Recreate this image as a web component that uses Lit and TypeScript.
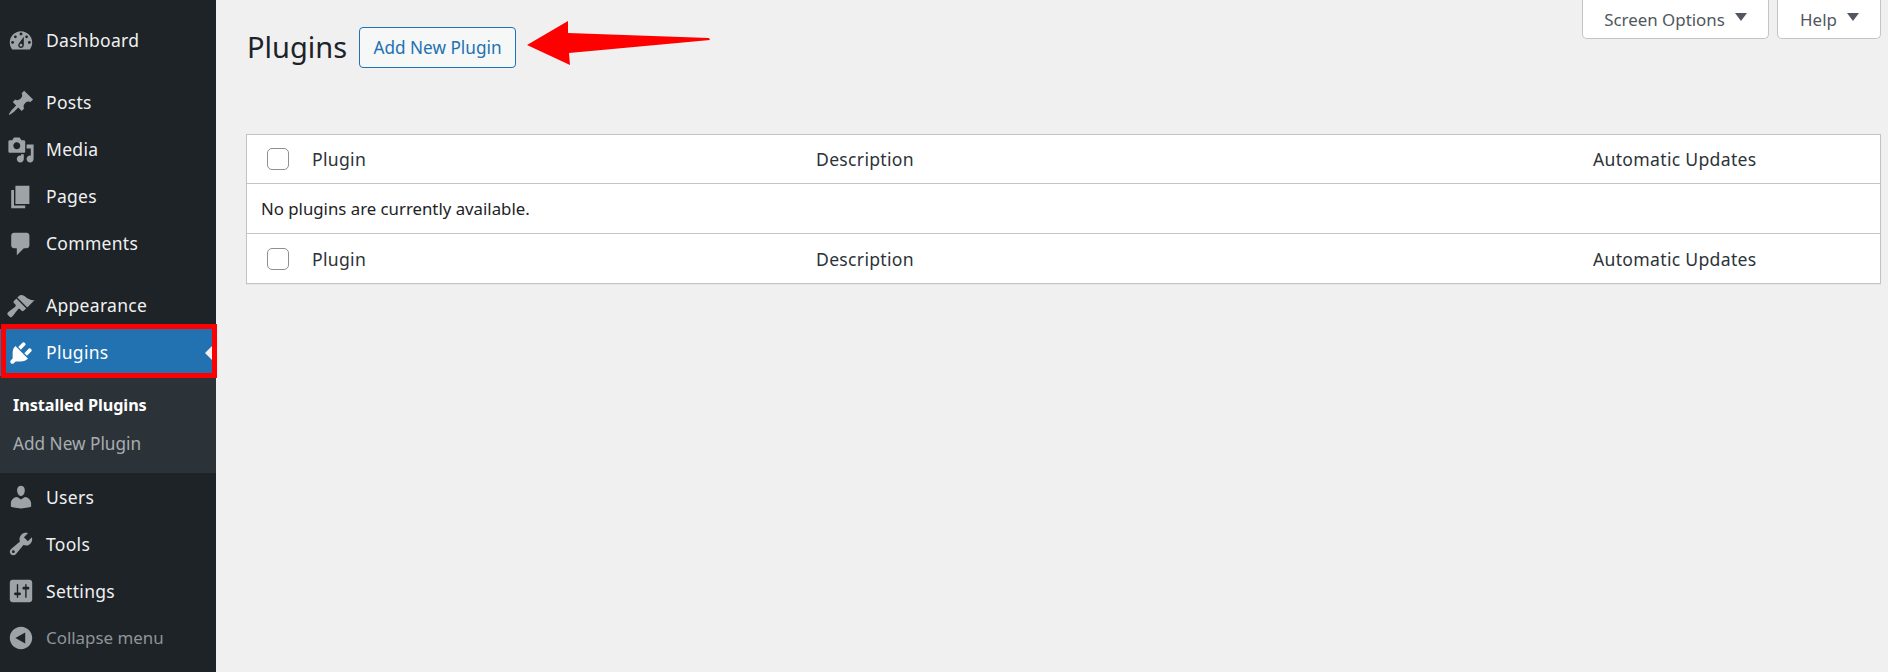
import { LitElement, html, css, svg } from "lit";
import { customElement } from "lit/decorators.js";

const P: Record<string, string> = {
  dashboard: "M3.76 16h12.48c1.1-1.37 1.76-3.11 1.76-5 0-4.42-3.58-8-8-8s-8 3.58-8 8c0 1.89.66 3.63 1.76 5zM10 4c.55 0 1 .45 1 1s-.45 1-1 1-1-.45-1-1 .45-1 1-1zM6 6c.55 0 1 .45 1 1s-.45 1-1 1-1-.45-1-1 .45-1 1-1zm8 0c.55 0 1 .45 1 1s-.45 1-1 1-1-.45-1-1 .45-1 1-1zm-5.37 5.55L12 7v6c0 1.1-.9 2-2 2s-2-.9-2-2c0-.57.24-1.08.63-1.45zM4 10c.55 0 1 .45 1 1s-.45 1-1 1-1-.45-1-1 .45-1 1-1zm12 0c.55 0 1 .45 1 1s-.45 1-1 1-1-.45-1-1 .45-1 1-1zm-5 3c0-.55-.45-1-1-1s-1 .45-1 1 .45 1 1 1 1-.45 1-1z",
  posts: "M10.44 3.02l1.82-1.82 6.36 6.35-1.83 1.82c-1.05-.68-2.48-.57-3.41.36l-.75.75c-.92.93-1.04 2.35-.35 3.41l-1.83 1.82-2.41-2.41-2.8 2.79c-.42.42-3.38 2.71-3.8 2.29s1.86-3.39 2.28-3.81l2.79-2.79L4.1 9.36l1.83-1.82c1.05.69 2.48.57 3.4-.36l.75-.75c.93-.92 1.05-2.35.36-3.41z",
  media: "M13 11V4c0-.55-.45-1-1-1h-1.67L9 1H5L3.67 3H2c-.55 0-1 .45-1 1v7c0 .55.45 1 1 1h10c.55 0 1-.45 1-1zM7 4.5c1.38 0 2.5 1.12 2.5 2.5S8.38 9.5 7 9.5 4.5 8.38 4.5 7 5.62 4.5 7 4.5zM14 6h5v10.5c0 1.38-1.12 2.5-2.5 2.5S14 17.88 14 16.5s1.12-2.5 2.5-2.5c.17 0 .34.02.5.05V9h-3V6zm-4 8.05V13h2v3.5c0 1.38-1.12 2.5-2.5 2.5S7 17.88 7 16.5 8.12 14 9.5 14c.17 0 .34.02.5.05z",
  pages: "M6 15V2h10v13H6zm-1 1h8v2H3V5h2v11z",
  comments: "M5 2h9c1.1 0 2 .9 2 2v7c0 1.1-.9 2-2 2h-2l-5 5v-5H5c-1.1 0-2-.9-2-2V4c0-1.1.9-2 2-2z",
  appearance: "M14.48 11.06L7.41 3.99l1.5-1.5c.5-.56 2.3-.47 3.51.32 1.21.8 1.43 1.28 2.91 2.1 1.18.64 2.45 1.26 4.45.85zm-.71.71L6.7 4.7 4.93 6.47c-.39.39-.39 1.02 0 1.41l1.06 1.06c.39.39.39 1.03 0 1.42-.6.6-1.43 1.15-2.21 1.75-.78.59-1.67 1.18-2.38 1.88-.29.28-.58.57-.87.86-.4.4-.4 1.04 0 1.44l1.48 1.48c.4.4 1.04.4 1.44 0 .29-.29.58-.58.86-.87.7-.71 1.29-1.6 1.88-2.38.6-.78 1.15-1.61 1.75-2.21.39-.39 1.03-.39 1.42 0l1.06 1.06c.39.39 1.02.39 1.41 0z",
  plugins: "M13.11 4.36L9.87 7.6 8 5.73l3.24-3.24c.35-.34 1.05-.2 1.56.32.52.51.66 1.21.31 1.55zm-8 1.77l.91-1.12 9.01 9.01-1.19.84c-.71.71-2.63 1.16-3.82 1.16H6.14L4.9 17.26c-.59.59-1.54.59-2.12 0-.59-.58-.59-1.53 0-2.12l1.24-1.24v-3.88c0-1.13.4-3.19 1.09-3.89zm7.26 3.97l3.24-3.24c.34-.35 1.04-.21 1.55.31.52.51.66 1.21.31 1.55l-3.24 3.25z",
  users: "M10 9.25c-2.27 0-2.73-3.44-2.73-3.44C7 4.02 7.82 2 9.97 2c2.16 0 2.98 2.02 2.71 3.81 0 0-.41 3.44-2.68 3.44zm0 2.57L12.72 10c2.39 0 4.52 2.33 4.52 4.53v2.49s-3.65 1.13-7.24 1.13c-3.65 0-7.24-1.13-7.24-1.13v-2.49c0-2.25 1.94-4.48 4.47-4.48z",
  tools: "M16.68 9.77c-1.34 1.34-3.3 1.67-4.95.99l-5.41 6.52c-.99.99-2.59.99-3.57 0-.99-.98-.99-2.58 0-3.57l6.52-5.42c-.68-1.65-.35-3.61.99-4.95 1.28-1.28 3.12-1.62 4.72-1.06l-2.89 2.89 2.82 2.82 2.86-2.87c.53 1.58.18 3.39-1.09 4.65zM3.81 16.21c.4.39 1.03.39 1.42 0 .4-.4.4-1.03 0-1.43-.39-.39-1.02-.39-1.42 0-.39.4-.39 1.03 0 1.43z",
  settings: "M18 16V4c0-1.1-.9-2-2-2H4c-1.1 0-2 .9-2 2v12c0 1.1.9 2 2 2h12c1.1 0 2-.9 2-2zM8 11h1c.55 0 1 .45 1 1s-.45 1-1 1H8v1.5c0 .28-.22.5-.5.5s-.5-.22-.5-.5V13H6c-.55 0-1-.45-1-1s.45-1 1-1h1V5.5c0-.28.22-.5.5-.5s.5.22.5.5V11zm5-2h-1c-.55 0-1-.45-1-1s.45-1 1-1h1V5.5c0-.28.22-.5.5-.5s.5.22.5.5V7h1c.55 0 1 .45 1 1s-.45 1-1 1h-1v5.5c0 .28-.22.5-.5.5s-.5-.22-.5-.5V9z",
  collapse: "M18 10c0-4.42-3.58-8-8-8s-8 3.58-8 8 3.58 8 8 8 8-3.58 8-8zm-5 4l-7-4 7-4v8z",
};

const icon = (n: string) => html`<svg class="ico" viewBox="0 0 20 20">${svg`<path d=${P[n]}></path>`}</svg>`;

const item = (n: string, label: string, cls = "") =>
  html`<div class="item ${cls}">${icon(n)}<span>${label}</span></div>`;

const row = (cls: string) => html`
  <div class="row ${cls}">
    <span class="check"></span><span>Plugin</span><span>Description</span><span>Automatic Updates</span>
  </div>`;

@customElement("app-root")
export class AppRoot extends LitElement {
  static styles = css`
    :host {
      display: block;
      position: relative;
      width: 1888px;
      height: 672px;
      overflow: hidden;
      background: #f0f0f1;
      font-family: "Noto Sans", "Open Sans", sans-serif;
      font-size: 16.8px;
      color: #1d2327;
    }
    .page { display: flex; height: 672px; }
    aside {
      width: 216px;
      flex: none;
      background: #1d2327;
      padding-top: 17px;
      box-sizing: border-box;
      color: #f0f0f1;
      font-size: 17.5px;
      letter-spacing: 0.3px;
    }
    .item {
      height: 47px;
      display: flex;
      align-items: center;
      padding-left: 7px;
      gap: 11px;
      position: relative;
      box-sizing: border-box;
    }
    .item span { padding-bottom: 1px; }
    .item.low span { padding-bottom: 0; padding-top: 1px; }
    .ico { width: 28px; height: 28px; fill: #9ea3a8; flex: none; }
    .sep { margin-bottom: 15px; }
    .active { background: #2271b1; color: #fff; }
    .active .ico { fill: #fff; }
    .active::before {
      content: "";
      position: absolute;
      right: 3px;
      top: 16px;
      border: 8px solid transparent;
      border-left: 0;
      border-right-color: #f0f0f1;
    }
    .active::after {
      content: "";
      position: absolute;
      left: 1px;
      top: -5px;
      width: 216px;
      height: 54px;
      box-sizing: border-box;
      border: 5px solid #ff0000;
    }
    .sub { background: #2c3338; padding: 9px 0 10px; font-size: 17.2px; letter-spacing: 0; }
    .sub div { height: 39px; line-height: 40px; padding-left: 13px; color: #a9adb1; }
    .sub .cur { color: #fff; font-weight: 700; font-size: 16.2px; letter-spacing: -0.05px; }
    .collapse { color: #90949a; font-size: 16.9px; letter-spacing: 0; }
    main { flex: 1; padding: 0 7px 0 30px; min-width: 0; }
    .top { display: flex; justify-content: space-between; align-items: flex-start; }
    .title { display: flex; align-items: flex-start; padding-top: 27px; }
    h1 {
      margin: 0;
      width: 113px;
      padding-left: 1px;
      box-sizing: border-box;
      font-weight: 400;
      font-size: 29px;
      line-height: 40px;
      color: #1d2327;
    }
    .btn {
      height: 41px;
      width: 157px;
      box-sizing: border-box;
      display: flex;
      align-items: center;
      justify-content: center;
      padding-bottom: 1px;
      border: 1px solid #2271b1;
      border-radius: 4px;
      background: #f6f7f7;
      color: #2271b1;
      font-size: 17.2px;
    }
    .tabs { display: flex; gap: 8px; }
    .tab {
      height: 39px;
      box-sizing: border-box;
      background: #fff;
      border: 1px solid #c3c4c7;
      border-top: 0;
      border-radius: 0 0 5px 5px;
      color: #50575e;
      display: flex;
      align-items: center;
      justify-content: center;
      gap: 10px;
      font-size: 16.9px;
    }
    .tab::after {
      content: "";
      border: 6px solid transparent;
      border-top: 8px solid #50575e;
      border-bottom: 0;
      margin-bottom: 5px;
    }
    .t1 { width: 187px; }
    .t2 { width: 104px; padding-left: 1px; }
    .table {
      margin-top: 66px;
      background: #fff;
      border: 1px solid #c3c4c7;
      box-shadow: 0 1px 1px rgba(0, 0, 0, 0.04);
    }
    .row {
      display: grid;
      grid-template-columns: 65px 504px 777px 1fr;
      align-items: center;
      height: 48px;
      box-sizing: border-box;
      color: #2c3338;
      font-size: 17.6px;
      letter-spacing: 0.3px;
    }
    .row.foot { border-top: 1px solid #c3c4c7; height: 50px; }
    .check {
      width: 22px;
      height: 22px;
      box-sizing: border-box;
      margin-left: 20px;
      border: 1px solid #8c8f94;
      border-radius: 5px;
      background: #fff;
    }
    .empty {
      height: 50px;
      box-sizing: border-box;
      border-top: 1px solid #c3c4c7;
      display: flex;
      align-items: center;
      padding-left: 14px;
      color: #1d2327;
    }
    .arrow { position: absolute; left: 520px; top: 15px; width: 200px; height: 56px; fill: #ff0000; }
  `;

  render() {
    return html`
      <div class="page">
        <aside>
          ${item("dashboard", "Dashboard", "sep")}
          ${item("posts", "Posts")}
          ${item("media", "Media")}
          ${item("pages", "Pages")}
          ${item("comments", "Comments", "sep")}
          ${item("appearance", "Appearance")}
          ${item("plugins", "Plugins", "active")}
          <div class="sub">
            <div class="cur">Installed Plugins</div>
            <div>Add New Plugin</div>
          </div>
          ${item("users", "Users", "low")}
          ${item("tools", "Tools", "low")}
          ${item("settings", "Settings", "low")}
          ${item("collapse", "Collapse menu", "collapse")}
        </aside>
        <main>
          <div class="top">
            <div class="title">
              <h1>Plugins</h1>
              <div class="btn">Add New Plugin</div>
            </div>
            <div class="tabs">
              <div class="tab t1">Screen Options</div>
              <div class="tab t2">Help</div>
            </div>
          </div>
          <div class="table">
            ${row("head")}
            <div class="empty">No plugins are currently available.</div>
            ${row("foot")}
          </div>
        </main>
      </div>
      <svg class="arrow" viewBox="0 0 200 56">
        <polygon points="7,30 48,6 48,18 189,23 190,25 49,38 50,50"></polygon>
      </svg>
    `;
  }
}
